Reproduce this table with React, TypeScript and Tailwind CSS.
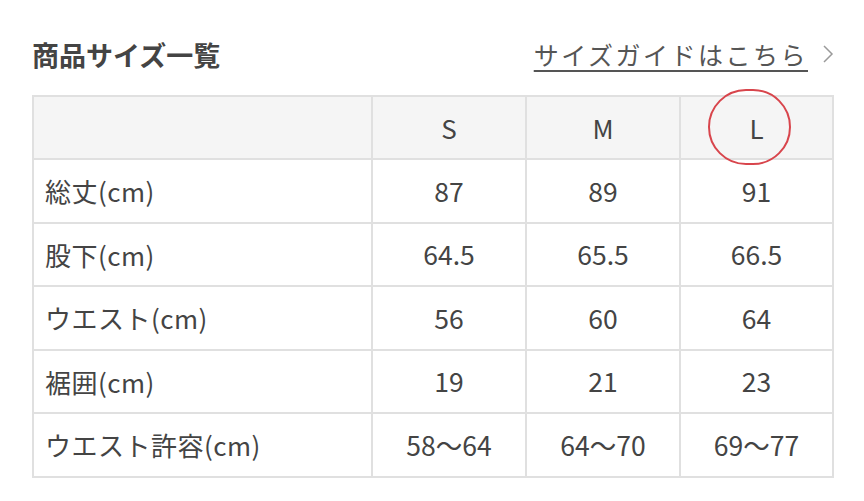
const sizes = ['S', 'M', 'L'];

const rows = [
  { label: '総丈(cm)', values: ['87', '89', '91'] },
  { label: '股下(cm)', values: ['64.5', '65.5', '66.5'] },
  { label: 'ウエスト(cm)', values: ['56', '60', '64'] },
  { label: '裾囲(cm)', values: ['19', '21', '23'] },
  { label: 'ウエスト許容(cm)', values: ['58〜64', '64〜70', '69〜77'] },
];

export default function App() {
  return (
    <div
      className="w-[864px] h-[501px] bg-white text-[#444] overflow-hidden"
      style={{ fontFamily: '"Noto Sans CJK JP", "Noto Sans", sans-serif' }}
    >
      <div className="pt-[34px] px-[32px]">
        {/* header */}
        <div className="flex items-center justify-between h-[40px]">
          <h2 className="text-[27px] font-bold text-[#444] leading-none">商品サイズ一覧</h2>
          <a href="#" className="flex items-center text-[#555]">
            <span className="text-[25px] tracking-[2.5px] underline underline-offset-[5px] decoration-[1.5px] leading-none">
              サイズガイドはこちら
            </span>
            <svg width="12" height="20" viewBox="0 0 12 20" className="ml-[14px] mr-[-2px]">
              <path d="M2 2 L10 10 L2 18" fill="none" stroke="#9a9a9a" strokeWidth="1.5" />
            </svg>
          </a>
        </div>

        {/* size table */}
        <table className="mt-[21px] w-[800px] border-collapse table-fixed">
          <colgroup>
            <col className="w-[339px]" />
            <col className="w-[154px]" />
            <col className="w-[154px]" />
            <col className="w-[153px]" />
          </colgroup>
          <thead>
            <tr className="h-[63px] bg-[#f5f5f5]">
              <th className="border-2 border-[#e0e0e0]"></th>
              {sizes.map(s => (
                <th key={s} className="border-2 border-[#e0e0e0] text-[26px] font-normal text-center">
                  {s === 'L' ? (
                    <span className="relative inline-block">
                      L
                      <span className="absolute left-1/2 top-1/2 w-[83px] h-[76px] -translate-x-[49px] -translate-y-[39px] rounded-full border-[2.5px] border-[#d8454c]"></span>
                    </span>
                  ) : s}
                </th>
              ))}
            </tr>
          </thead>
          <tbody>
            {rows.map(r => (
              <tr key={r.label} className="h-[63.5px]">
                <td className="border-2 border-[#e0e0e0] pl-[11px] text-[26px] tracking-[0.5px]">{r.label}</td>
                {r.values.map((v, i) => (
                  <td key={i} className="border-2 border-[#e0e0e0] text-center text-[26.5px]">{v}</td>
                ))}
              </tr>
            ))}
          </tbody>
        </table>
      </div>
    </div>
  );
}
